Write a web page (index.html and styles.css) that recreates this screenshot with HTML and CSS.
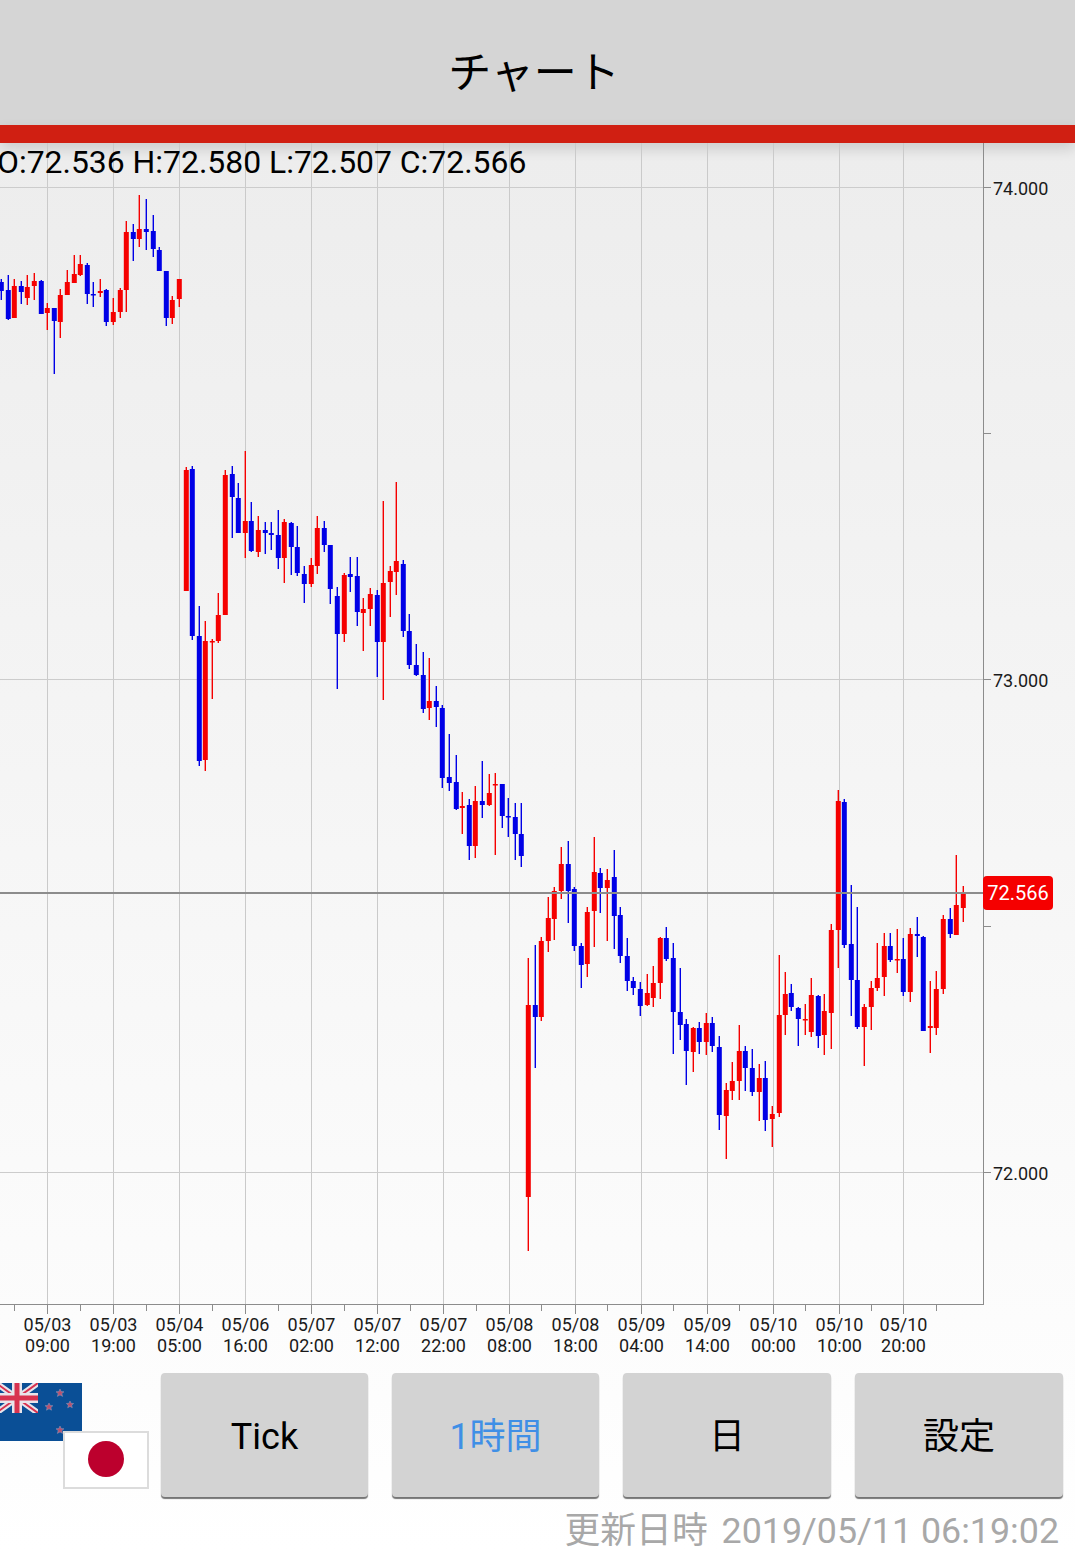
FILE: index.html
```html
<!DOCTYPE html>
<html lang="ja">
<head>
    <meta charset="UTF-8">
    <meta name="viewport" content="width=device-width, initial-scale=1.0">
    <title>チャート</title>
    <link rel="stylesheet" href="styles.css">
</head>
<body>
    <header class="app-header">
        <h1>チャート</h1>
    </header>
    <div class="accent-bar"></div>

    <main class="chart-area">
        <svg id="chart" class="chart" viewBox="0 143 1075 1230" width="1075" height="1230"></svg>
        <p class="ohlc">O:72.536 H:72.580 L:72.507 C:72.566</p>
    </main>

    <section class="controls">
        <div class="pair">
            <svg class="flag flag-nz" viewBox="0 0 86 58" width="86" height="58">
                <rect width="86" height="58" fill="#0a4f96"/>
                <g clip-path="url(#jackClip)">
                    <path d="M0 0L42 30M42 0L0 30" stroke="#e8e4ea" stroke-width="6"/>
                    <path d="M0 0L42 30M42 0L0 30" stroke="#d8324f" stroke-width="2"/>
                    <path d="M21 0V30M0 15H42" stroke="#e8e4ea" stroke-width="10"/>
                    <path d="M21 0V30M0 15H42" stroke="#d8324f" stroke-width="5"/>
                </g>
                <clipPath id="jackClip"><rect width="42" height="30"/></clipPath>
                <g fill="#b9506e" stroke="#8fa0c0" stroke-width="0.5">
                    <path d="M64 6l1.2 2.6 2.8.2-2.2 1.8.8 2.8-2.6-1.5-2.6 1.5.8-2.8-2.2-1.8 2.8-.2z"/>
                    <path d="M53 20l1.2 2.4 2.7.3-2 1.8.6 2.7-2.5-1.4-2.5 1.4.6-2.7-2-1.8 2.7-.3z"/>
                    <path d="M74 18l1.1 2.3 2.5.2-1.9 1.7.6 2.5-2.3-1.3-2.3 1.3.6-2.5-1.9-1.7 2.5-.2z"/>
                    <path d="M64 43l1.2 2.6 2.8.2-2.2 1.8.8 2.8-2.6-1.5-2.6 1.5.8-2.8-2.2-1.8 2.8-.2z"/>
                </g>
            </svg>
            <svg class="flag flag-jp" viewBox="0 0 86 58" width="86" height="58">
                <rect x="1" y="1" width="84" height="56" fill="#fff" stroke="#dcdcdc" stroke-width="2"/>
                <circle cx="43" cy="28" r="18" fill="#bc002d"/>
            </svg>
        </div>
        <div class="button-group">
            <button type="button">Tick</button>
            <button type="button" class="active">1時間</button>
            <button type="button">日</button>
            <button type="button">設定</button>
        </div>
    </section>

    <footer class="updated"><span class="updated-label">更新日時</span> 2019/05/11 06:19:02</footer>

    <script src="chart.js"></script>
</body>
</html>
```

FILE: styles.css
```css
html, body {
    margin: 0;
    height: 1552px;
    overflow: hidden;
}
body {
    font-family: Roboto, "Noto Sans CJK JP", sans-serif;
    color: #000;
    background: linear-gradient(#ebebeb 0, #ffffff 100%);
}
.app-header {
    height: 125px;
    background-color: #d5d5d5;
    display: flex;
    align-items: center;
    justify-content: center;
}
.app-header h1 {
    margin: 12px 7px 0 0;
    font-size: 43px;
    font-weight: 400;
}
.accent-bar {
    position: relative;
    height: 18px;
    background-color: #d01f12;
    box-shadow: 0 6px 14px rgba(0,0,0,0.14);
}
.chart-area {
    position: relative;
    height: 1230px;
}
.chart {
    display: block;
}
.ohlc {
    position: absolute;
    top: 0;
    left: -3px;
    margin: 0;
    font-size: 31.9px;
    line-height: 38px;
    white-space: nowrap;
}
.axis-label {
    font-size: 18px;
    fill: #1a1a1a;
}
.price-label {
    font-size: 20px;
    fill: #fff;
}
.controls {
    display: flex;
    height: 125px;
}
.pair {
    position: relative;
    flex: 0 0 161px;
}
.flag {
    position: absolute;
    display: block;
}
.flag-nz {
    left: -4px;
    top: 10px;
}
.flag-jp {
    left: 63px;
    top: 58px;
}
.button-group {
    flex: 1;
    display: grid;
    grid-template-columns: 207px 207px 208px 208px;
    gap: 24px;
    padding-bottom: 1px;
}
.button-group button {
    border: none;
    border-radius: 4px;
    background-color: #d3d3d3;
    box-shadow: 0 2px 1px #757575;
    font-family: inherit;
    font-size: 36px;
    line-height: 40px;
    color: #000;
    padding: 4px 0 0;
}
.button-group button.active {
    color: #3f8fe6;
}
.updated {
    padding: 10px 16px 0 0;
    text-align: right;
    font-size: 35.8px;
    line-height: 46px;
    color: #a8a8a8;
}
.updated-label {
    margin-right: 5px;
}
```

FILE: chart.js
```js
// x, wick top, body top, body bottom, wick bottom, r = up / b = down
const candles = [
    [1,279,282,291,300,'b'],[8,275,290,319,320,'b'],[14,279,286,318,318,'r'],[21,281,286,292,304,'b'],
    [27,275,287,298,305,'r'],[34,273,281,286,300,'r'],[41,280,281,314,314,'b'],[47,303,308,313,330,'r'],
    [54,308,308,321,374,'b'],[60,289,295,322,338,'r'],[67,270,282,295,295,'r'],[74,255,274,283,283,'r'],
    [80,255,264,275,276,'r'],[87,263,265,294,304,'b'],[93,282,294,295,307,'b'],[100,279,291,293,297,'r'],
    [106,289,290,322,326,'b'],[113,298,312,322,325,'r'],[120,288,290,312,318,'r'],[126,221,232,290,312,'r'],
    [133,224,232,239,261,'b'],[139,195,229,239,247,'r'],[146,199,229,232,250,'b'],[153,215,231,249,257,'b'],
    [159,247,250,271,271,'b'],[166,271,271,318,326,'b'],[172,296,300,318,324,'r'],[179,279,279,299,307,'r'],
    [186,467,470,591,591,'r'],[192,466,469,636,640,'b'],[199,606,636,761,766,'b'],[205,621,641,760,771,'r'],
    [212,639,641,642,699,'r'],[218,593,615,641,643,'r'],[225,470,475,615,615,'r'],[232,466,474,497,538,'b'],
    [238,483,498,533,533,'b'],[245,451,521,533,558,'r'],[251,502,521,551,552,'b'],[258,516,530,552,557,'r'],
    [265,522,530,533,554,'b'],[271,522,533,535,550,'b'],[278,510,535,558,569,'b'],[284,519,522,558,583,'r'],
    [291,522,523,547,575,'b'],[297,526,547,573,576,'b'],[304,566,574,584,603,'b'],[311,558,565,584,587,'r'],
    [317,516,528,566,574,'r'],[324,521,528,545,552,'b'],[330,545,545,589,604,'b'],[337,587,596,634,689,'b'],
    [344,573,575,634,642,'r'],[350,557,574,577,592,'b'],[357,557,576,612,626,'b'],[363,598,609,613,651,'r'],
    [370,588,594,609,626,'r'],[377,590,595,642,677,'b'],[383,501,583,642,700,'r'],[390,566,571,582,617,'r'],
    [396,482,561,572,595,'r'],[403,560,564,631,637,'b'],[409,614,631,665,669,'b'],[416,644,665,675,676,'b'],
    [423,652,675,709,713,'b'],[429,658,701,708,720,'r'],[436,686,701,707,727,'b'],[442,705,708,778,788,'b'],
    [449,734,777,783,791,'b'],[456,755,782,809,810,'b'],[462,792,806,808,834,'r'],[469,799,805,846,860,'b'],
    [475,786,801,846,858,'r'],[482,761,801,805,818,'b'],[489,774,793,805,806,'r'],[495,773,784,785,855,'r'],
    [502,784,784,816,828,'b'],[508,798,816,817,837,'b'],[515,803,817,834,860,'b'],[521,803,834,856,867,'b'],
    [528,958,1005,1197,1251,'r'],[535,945,1005,1017,1068,'b'],[541,937,941,1017,1021,'r'],[548,897,918,941,952,'r'],
    [554,887,891,919,940,'r'],[561,847,864,891,899,'r'],[568,841,864,891,923,'b'],[574,887,889,946,951,'b'],
    [581,943,946,965,988,'b'],[587,907,912,964,977,'r'],[594,837,872,911,947,'r'],[600,868,873,888,913,'b'],
    [607,869,880,888,941,'r'],[614,850,877,916,949,'b'],[620,907,915,956,963,'b'],[627,938,956,981,991,'b'],
    [633,977,981,988,995,'b'],[640,982,989,1006,1016,'b'],[647,974,993,1005,1006,'r'],[653,966,983,998,1007,'r'],
    [660,937,938,983,999,'r'],[666,927,938,959,961,'b'],[673,943,958,1012,1054,'b'],[680,968,1012,1025,1040,'b'],
    [686,1019,1024,1051,1085,'b'],[693,1027,1028,1052,1072,'r'],[699,1022,1028,1042,1054,'b'],[706,1013,1023,1042,1055,'r'],
    [712,1017,1023,1046,1052,'b'],[719,1036,1047,1115,1130,'b'],[726,1083,1090,1116,1159,'r'],[732,1062,1081,1091,1100,'r'],
    [739,1025,1051,1081,1100,'r'],[745,1046,1051,1068,1091,'b'],[752,1049,1068,1092,1096,'b'],[759,1064,1078,1092,1121,'r'],
    [765,1061,1078,1120,1131,'b'],[772,1106,1114,1119,1147,'r'],[779,955,1015,1113,1117,'r'],[785,972,994,1015,1035,'r'],
    [791,984,993,1007,1011,'b'],[798,1007,1008,1019,1046,'b'],[805,1004,1019,1020,1035,'r'],[811,978,995,1032,1037,'r'],
    [818,995,996,1036,1048,'b'],[824,994,1011,1035,1055,'r'],[831,924,930,1013,1049,'r'],[838,790,801,930,968,'r'],
    [844,799,802,945,948,'b'],[851,885,944,980,1016,'b'],[857,907,980,1027,1029,'b'],[864,1004,1007,1027,1066,'r'],
    [871,981,988,1007,1030,'r'],[877,943,978,988,991,'r'],[884,933,946,977,996,'r'],[890,933,946,960,962,'b'],
    [897,929,959,960,973,'r'],[903,938,959,992,996,'b'],[910,928,934,992,1002,'r'],[917,917,934,936,957,'b'],
    [923,936,937,1031,1031,'b'],[930,981,1026,1028,1053,'r'],[936,971,989,1028,1035,'r'],[943,915,919,989,994,'r'],
    [950,908,919,934,938,'b'],[956,855,905,935,935,'r'],[963,886,893,908,922,'r']
];

const timeTicks = [
    [47,'05/03','09:00'],[113,'05/03','19:00'],[179,'05/04','05:00'],[245,'05/06','16:00'],
    [311,'05/07','02:00'],[377,'05/07','12:00'],[443,'05/07','22:00'],[509,'05/08','08:00'],
    [575,'05/08','18:00'],[641,'05/09','04:00'],[707,'05/09','14:00'],[773,'05/10','00:00'],
    [839,'05/10','10:00'],[903,'05/10','20:00']
];
const minorTicks = [14,80,146,212,278,344,410,476,541,607,673,739,805,871,936];
const priceTicks = [[187,188,'74.000'],[679,680,'73.000'],[1172,1173,'72.000']];
const colors = { r: '#f50000', b: '#0000e6' };

let out = '';
function rect(x, y, w, h, fill) {
    out += `<rect x="${x}" y="${y}" width="${w}" height="${h}" fill="${fill}"/>`;
}
function text(x, y, anchor, cls, str) {
    out += `<text x="${x}" y="${y}" text-anchor="${anchor}" class="${cls}">${str}</text>`;
}

// grid
timeTicks.forEach(t => rect(t[0], 143, 1, 1161, '#cacaca'));
priceTicks.forEach(t => rect(0, t[0], 983, 1, '#cccccc'));

// candles
candles.forEach(c => {
    const [x, high, top, bottom, low, kind] = c;
    rect(x - 0.4, high, 1.4, low - high, colors[kind]);
    rect(x - 2.2, top, 5, Math.max(bottom - top, 1.5), colors[kind]);
});

// current price line
rect(0, 892, 983, 2, '#8c8c8c');

// axes
rect(983, 143, 1, 1162, '#8c8c8c');
rect(0, 1304, 983, 1, '#8c8c8c');
priceTicks.forEach(t => {
    rect(983, t[0], 8, 1, '#8c8c8c');
    text(993, t[1] + 6.5, 'start', 'axis-label', t[2]);
});
[433, 926].forEach(y => rect(983, y, 8, 1, '#8c8c8c'));
minorTicks.forEach(x => rect(x, 1304, 1, 7, '#8c8c8c'));
timeTicks.forEach(t => {
    rect(t[0], 1304, 1, 10, '#8c8c8c');
    text(t[0] + 0.5, 1331, 'middle', 'axis-label', t[1]);
    text(t[0] + 0.5, 1352, 'middle', 'axis-label', t[2]);
});

// price badge
out += '<rect x="983" y="876" width="70" height="34" rx="4" fill="#f50000"/>';
text(1018, 900, 'middle', 'price-label', '72.566');

document.getElementById('chart').innerHTML = out;
```
